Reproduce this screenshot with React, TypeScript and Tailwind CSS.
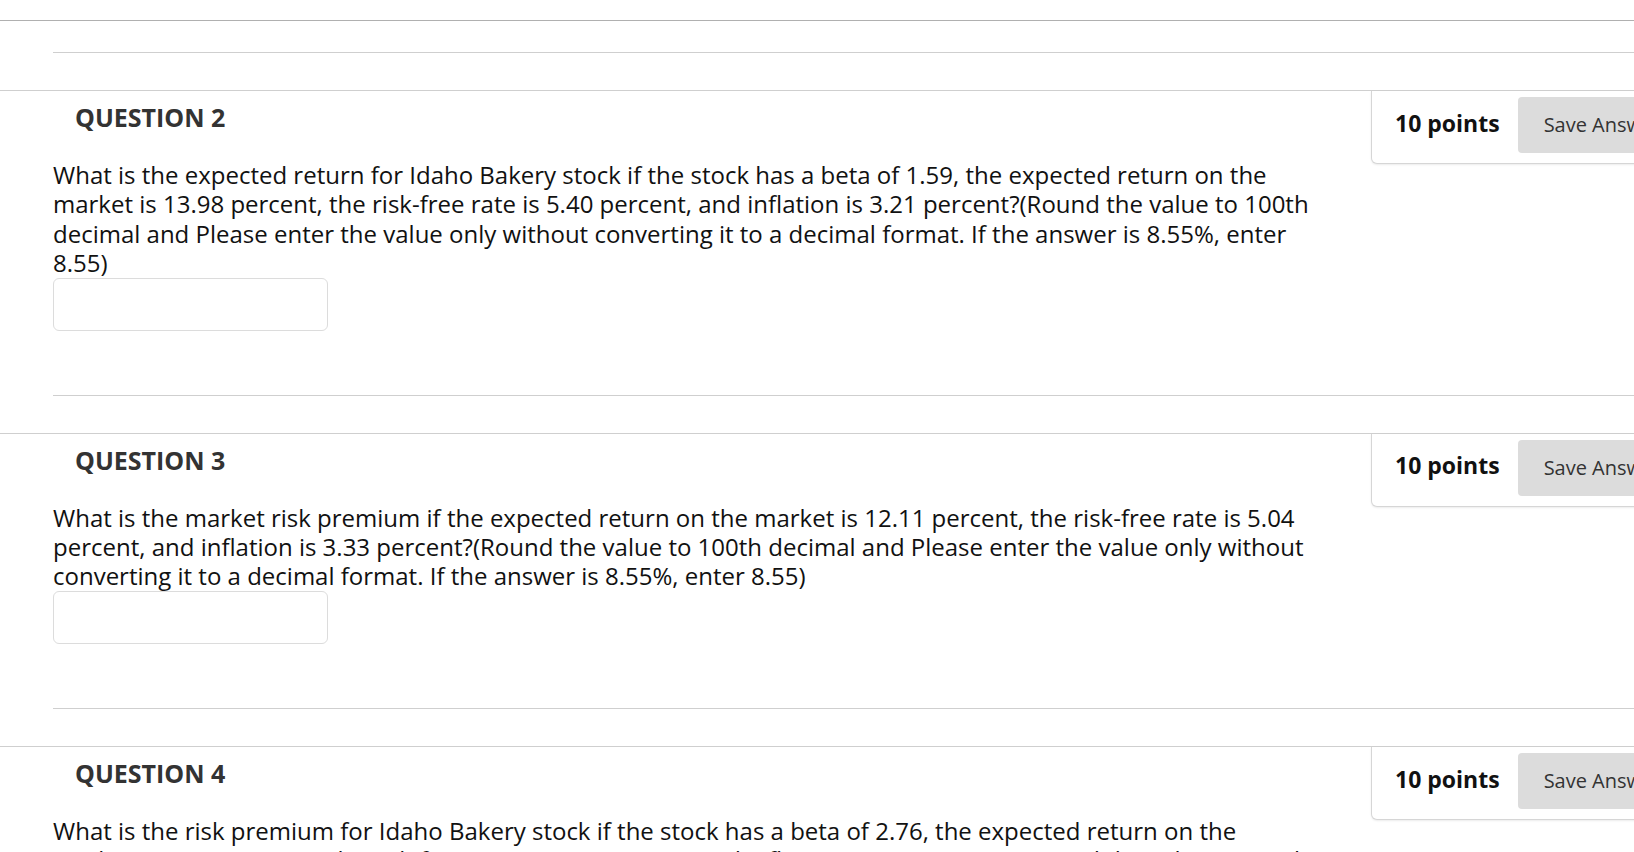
const questions = [
  {
    n: 2,
    text: 'What is the expected return for Idaho Bakery stock if the stock has a beta of 1.59, the expected return on the market is 13.98 percent, the risk-free rate is 5.40 percent, and inflation is 3.21 percent?(Round the value to 100th decimal and Please enter the value only without converting it to a decimal format. If the answer is 8.55%, enter 8.55)',
  },
  {
    n: 3,
    text: 'What is the market risk premium if the expected return on the market is 12.11 percent, the risk-free rate is 5.04 percent, and inflation is 3.33 percent?(Round the value to 100th decimal and Please enter the value only without converting it to a decimal format. If the answer is 8.55%, enter 8.55)',
  },
  {
    n: 4,
    text: 'What is the risk premium for Idaho Bakery stock if the stock has a beta of 2.76, the expected return on the market is 12.09 percent, the risk-free rate is 4.43 percent, and inflation is 3.43 percent?(Round the value to 100th decimal and Please enter the value only without converting it to a decimal format. If the answer is 8.55%, enter 8.55)',
  },
];

const PointsBox = () => (
  <div className="flex items-center gap-[18px] rounded-bl-[6px] border border-t-0 border-[#d6d6d6] bg-white pt-[6px] pb-[10px] pl-[23px] shadow-[0_1px_2px_rgba(0,0,0,0.08)]">
    <span className="mb-[4px] text-[23px] font-bold text-[#111]">10 points</span>
    <button className="h-[56px] rounded-[4px] bg-[#dcdcdc] px-[26px] text-[20px] text-[#333]">Save Answer</button>
  </div>
);

const Question = ({ n, text }: { n: number; text: string }) => (
  <section className="mt-[37px] border-t border-[#cfcfcf]">
    <div className="flex">
      <div className="w-[1371px] shrink-0 pl-[53px]">
        <h2 className="pl-[22px] pt-[9px] text-[25px] font-bold leading-[34px] text-[#333]">QUESTION {n}</h2>
        <p className="mt-[26px] w-[1262px] text-[24px] leading-[29.4px] text-[#111]">{text}</p>
        <input className="block h-[53px] w-[275px] rounded-[6px] border border-[#dcdcdc] bg-white" />
      </div>
      <div className="w-[340px] shrink-0">
        <PointsBox />
      </div>
    </div>
    <div className="ml-[53px] mt-[64px] border-b border-[#cfcfcf]" />
  </section>
);

export default function App() {
  return (
    <div className="h-[852px] w-full overflow-hidden bg-white pt-[20px] font-['Open_Sans',sans-serif]">
      <div className="border-t border-[#b0b0b0]">
        <div className="ml-[53px] h-[32px] border-b border-[#cfcfcf]" />
      </div>
      {questions.map((q) => (
        <Question key={q.n} n={q.n} text={q.text} />
      ))}
    </div>
  );
}
